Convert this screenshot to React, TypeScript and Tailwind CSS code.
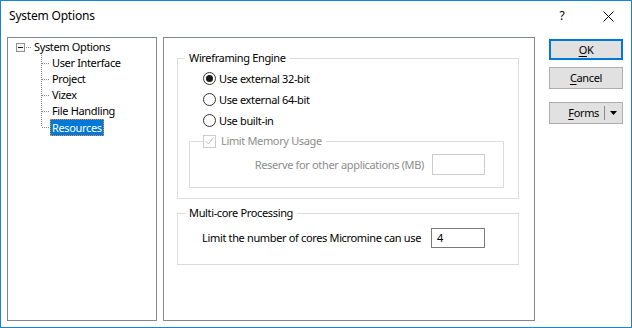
import React from "react";

const font = { fontFamily: '"Noto Sans", "Open Sans", sans-serif' };

const children = ["User Interface", "Project", "Vizex", "File Handling", "Resources"];

function Connector({ last }: { last: boolean }) {
  return (
    <svg width="9" height="16" className="shrink-0">
      <line x1="0.5" y1="0" x2="0.5" y2={last ? 8 : 16} stroke="#8a8a8a" strokeDasharray="1 1" />
      <line x1="1" y1="8.5" x2="9" y2="8.5" stroke="#8a8a8a" strokeDasharray="1 1" />
    </svg>
  );
}

function Radio({ checked, label }: { checked?: boolean; label: string }) {
  return (
    <div className="flex items-center h-[21px]">
      <span className="w-[13px] h-[13px] rounded-full border border-[#333] bg-white flex items-center justify-center">
        {checked && <span className="w-[7px] h-[7px] rounded-full bg-[#1a1a1a]" />}
      </span>
      <span className="ml-[3px]">{label}</span>
    </div>
  );
}

export default function App() {
  return (
    <div
      style={font}
      className="w-[632px] h-[328px] border border-[#1883d7] bg-white flex flex-col text-[11px] tracking-[-0.35px] text-black leading-[16px] overflow-hidden whitespace-nowrap"
    >
      {/* Title bar */}
      <div className="h-[30px] flex items-center pl-[8px] shrink-0 text-[12px] tracking-[-0.2px]">
        <span className="flex-1">System Options</span>
        <span className="w-[10px] text-center mr-[36px]">?</span>
        <svg width="11" height="11" className="mr-[17px]">
          <line x1="0.5" y1="0.5" x2="10.5" y2="10.5" stroke="#000" />
          <line x1="10.5" y1="0.5" x2="0.5" y2="10.5" stroke="#000" />
        </svg>
      </div>

      <div className="flex-1 flex pt-[6px] pb-[6px] pl-[6px] pr-[8px]">
        {/* Tree */}
        <div className="w-[150px] border border-[#828790] bg-white pt-[1px]">
          <div className="flex items-center h-[16px] pl-[8px]">
            <span className="w-[9px] h-[9px] border border-[#919191] bg-[#f4f4f4] flex items-center justify-center">
              <span className="w-[5px] h-[1px] bg-[#1a1a1a]" />
            </span>
            <svg width="7" height="16" className="ml-[1px]">
              <line x1="0" y1="8.5" x2="6" y2="8.5" stroke="#8a8a8a" strokeDasharray="1 1" />
            </svg>
            <span className="ml-[1px]">System Options</span>
          </div>
          <div className="pl-[33px]">
            {children.map((c, i) => (
              <div key={c} className="flex items-center h-[16px]">
                <Connector last={i === children.length - 1} />
                {i === children.length - 1 ? (
                  <span className="h-[17px] px-[1px] bg-[#0078d7] text-white border border-dotted border-[#ff8728] leading-[15px]">
                    {c}
                  </span>
                ) : (
                  <span className="pl-[2px]">{c}</span>
                )}
              </div>
            ))}
          </div>
        </div>

        {/* Right panel */}
        <div className="w-[372px] ml-[6px] border border-[#828790] bg-white pl-[13px] pr-[15px] pt-[12px]">
          <fieldset className="border border-[#dcdcdc] px-0">
            <legend className="ml-[7px] px-[4px]">Wireframing Engine</legend>
            <div className="pt-[2px] pl-[11px] pr-[14px] pb-[10px]">
              <div className="pl-[14px]">
                <Radio checked label="Use external 32-bit" />
                <Radio label="Use external 64-bit" />
                <Radio label="Use built-in" />
              </div>
              <fieldset className="mt-[2px] border border-[#dcdcdc] px-0 text-[#8d8d8d]">
                <legend className="ml-[13px] pr-[4px] flex items-center">
                  <span className="w-[13px] h-[13px] border border-[#cccccc] bg-white flex items-center justify-center">
                    <svg width="9" height="8">
                      <polyline points="0.5,4 3.5,7 8.5,0.5" fill="none" stroke="#bcbcbc" strokeWidth="1" />
                    </svg>
                  </span>
                  <span className="ml-[5px]">Limit Memory Usage</span>
                </legend>
                <div className="flex items-center justify-end gap-[8px] pt-[5px] pr-[18px] pb-[12px]">
                  <span>Reserve for other applications (MB)</span>
                  <span className="w-[53px] h-[21px] border border-[#cccccc] bg-white" />
                </div>
              </fieldset>
            </div>
          </fieldset>

          <fieldset className="mt-[6px] border border-[#dcdcdc] px-0">
            <legend className="ml-[7px] px-[4px]">Multi-core Processing</legend>
            <div className="flex items-center justify-end gap-[10px] pt-[7px] pr-[33px] pb-[16px]">
              <span>Limit the number of cores Micromine can use</span>
              <span className="w-[54px] h-[20px] border border-[#7a7a7a] bg-white pl-[5px] leading-[18px]">4</span>
            </div>
          </fieldset>
        </div>

        {/* Buttons */}
        <div className="ml-[14px] w-[74px] pt-[2px] flex flex-col">
          <button className="h-[21px] border-2 border-[#0078d7] bg-[#e1e1e1] leading-[16px]">
            <span className="underline underline-offset-2">O</span>K
          </button>
          <button className="mt-[7px] h-[22px] border border-[#adadad] bg-[#e1e1e1] leading-[16px]">
            <span className="underline underline-offset-2">C</span>ancel
          </button>
          <button className="mt-[13px] h-[22px] border border-[#adadad] bg-[#e1e1e1] flex items-center justify-end pr-[5px]">
            <span>
              <span className="underline underline-offset-2">F</span>orms
            </span>
            <span className="ml-[5px] w-[1px] h-[14px] bg-[#8a8a8a]" />
            <svg width="7" height="4" className="ml-[5px]">
              <polygon points="0,0 7,0 3.5,4" fill="#000" />
            </svg>
          </button>
        </div>
      </div>
    </div>
  );
}
